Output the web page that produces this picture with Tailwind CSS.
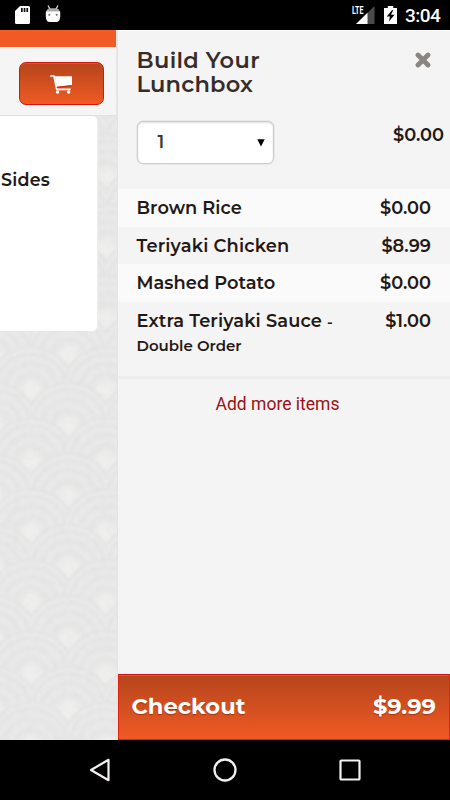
<!DOCTYPE html>
<html lang="en">
<head>
<meta charset="utf-8">
<meta name="viewport" content="width=device-width, initial-scale=1">
<title>Build Your Lunchbox</title>
<script src="https://cdn.jsdelivr.net/npm/@tailwindcss/browser@4"></script>
</head>
<body class="w-[450px] h-[800px] overflow-hidden bg-black font-['Montserrat','Inter',sans-serif] text-[#231815]">
<div class="flex flex-col h-[800px]">
  <!-- Status bar -->
  <header class="h-[30px] shrink-0 flex items-start pl-[15px] pr-[10px] text-white">
    <svg class="w-[15px] h-[18px] mt-[6px]" viewBox="0 0 15 18"><path d="M5 0h8.500q1.500 0 1.500 1.500v15q0 1.500-1.500 1.500h-12Q0 18 0 16.500V5Z" fill="#fff"/><path d="M6 2h1.700v4H6zM8.700 2h1.700v4H8.700zM11.400 2h1.700v4h-1.700z" fill="#111"/></svg>
    <svg class="w-[16px] h-[18px] mt-[5px] ml-[15px]" viewBox="0 0 16 18"><path d="M3 0.500 5 4M13 0.500 11 4" stroke="#ddd" stroke-width="1.300"/><path d="M1 7Q2 3.300 5 3.300h6q3 0 4 3.700Z" fill="#aaa"/><path d="M.8 6.500h14.400v5Q15 17 11 17H5Q1 17 .8 11.500Z" fill="#fff"/><circle cx="4.300" cy="9.800" r="1.100" fill="#777"/><circle cx="11.700" cy="9.800" r="1.100" fill="#777"/></svg>
    <div class="flex-1"></div>
    <svg class="w-[24px] h-[20px] mt-[5px]" viewBox="0 0 24 20"><path d="M22.500 1v18H4Z" fill="#4a4a4a"/><path d="M15.500 7.800V19H4Z" fill="#fff"/><path d="M0 0h12.500v9.500H0z" fill="#000"/><text x="0" y="8.800" font-family="Roboto" font-weight="700" font-size="10.500" textLength="11.500" lengthAdjust="spacingAndGlyphs" fill="#fff">LTE</text></svg>
    <svg class="w-[13px] h-[18px] mt-[6px] ml-[8px]" viewBox="0 0 12 18" preserveAspectRatio="none"><path d="M3.500 0h5v2H12v16H0V2h3.500Z" fill="#fff"/><path d="M7.500 4 2.500 10.500h3L4.500 15.500 9.800 8.800H6.500L8.500 4Z" fill="#000"/></svg>
    <span class="font-[Roboto] font-medium text-[19px] leading-[30px] mt-[1px] ml-[8px] w-[35px] whitespace-nowrap tracking-[-0.500px]">3:04</span>
  </header>

  <div class="h-[710px] shrink-0 flex">
    <!-- Menu page behind the drawer -->
    <main class="relative isolate w-[117.500px] shrink-0 bg-[#e6e6e5] overflow-hidden border-r border-[#e4e4e4]">
      <svg class="absolute inset-0 -z-10 w-[117px] h-[710px]" viewBox="0 30 117 710">
        <defs>
          <radialGradient id="scale">
            <stop offset="0" stop-color="#f0f0ef"/><stop offset=".18" stop-color="#ededec"/><stop offset=".36" stop-color="#e5e5e5"/>
            <stop offset=".48" stop-color="#eaeaea"/><stop offset=".6" stop-color="#e5e5e5"/><stop offset=".72" stop-color="#eaeaea"/>
            <stop offset=".82" stop-color="#e5e5e5"/><stop offset=".9" stop-color="#eaeaea"/><stop offset="1" stop-color="#e3e3e3"/>
          </radialGradient>
          <pattern id="waves" x="31" y="36" width="75" height="71" patternUnits="userSpaceOnUse">
            <g fill="url(#scale)">
              <circle cx="0" cy="0" r="45"/><circle cx="75" cy="0" r="45"/>
              <circle cx="37.500" cy="35.500" r="45"/>
              <circle cx="0" cy="71" r="45"/><circle cx="75" cy="71" r="45"/>
              <circle cx="37.500" cy="106.500" r="45"/>
            </g>
          </pattern>
          <filter id="fiber" x="0" y="0" width="1" height="1"><feGaussianBlur stdDeviation="1"/></filter>
          <filter id="paper" x="0" y="0" width="1" height="1"><feTurbulence type="fractalNoise" baseFrequency=".15" numOctaves="3" seed="4"/><feColorMatrix values="0 0 0 0 .6  0 0 0 0 .6  0 0 0 0 .6  .6 0 0 0 -.24"/></filter>
        </defs>
        <rect x="-15" y="15" width="147" height="740" fill="url(#waves)" filter="url(#fiber)"/>
        <rect y="30" width="117" height="710" filter="url(#paper)" opacity=".35"/>
      </svg>
      <div class="h-[17px] w-[116px] bg-[#f15a24]"></div>
      <div class="h-[69px] w-[116px] pt-[15px] pl-[18.500px] bg-[#f5f5f5] border-b border-[#e0e0e0]">
        <button class="flex w-[85px] h-[43px] items-center justify-center rounded-[7px] border border-[#d9140c] bg-linear-to-b from-[#b5451c] to-[#f15a24] shadow-[inset_0_1px_0_#e4501f]" aria-label="Cart">
          <svg class="w-[23px] h-[21px] mt-[1px]" viewBox="0 0 23 21"><path d="M.9 2H4l2.700 13.300H20" fill="none" stroke="#fff" stroke-width="1.700" stroke-linecap="round" stroke-linejoin="round"/><path d="M4.700 2.200H22V11L6.700 12.800Z" fill="#fff"/><path d="M6.700 13.400 21 11.800" stroke="#c2220f" stroke-width="1"/><circle cx="7.600" cy="18" r="1.800" fill="#fff"/><circle cx="18.600" cy="18" r="1.800" fill="#fff"/></svg>
        </button>
      </div>
      <section class="w-[98px] h-[215px] rounded-r-[5px] bg-white border-r border-[#ededed] pt-[51px] pl-[1px]">
        <h2 class="text-[17.500px] leading-[26px] font-semibold tracking-[0.200px]">Sides</h2>
      </section>
    </main>

    <!-- Order drawer -->
    <aside class="flex-1 flex flex-col bg-[#f4f4f4] border-t border-white">
      <div class="h-[158px] shrink-0 pl-[19px] pr-[6px]">
        <div class="flex justify-between pt-[17px] pr-[13px]">
          <h1 class="text-[22.500px] leading-[24px] font-semibold text-[#372c29]"><span class="block tracking-[0.350px]">Build Your</span><span class="block tracking-[0.200px]">Lunchbox</span></h1>
          <svg class="w-[16px] h-[16px] mt-[4px]" viewBox="0 0 16 16"><path d="M3 3 13 13M13 3 3 13" stroke="#8b8581" stroke-width="4.800" stroke-linecap="round"/></svg>
        </div>
        <div class="flex justify-between items-start mt-[25px]">
          <div class="w-[137.500px] h-[43px] rounded-[6px] border-[1.500px] border-[#cdcdcd] bg-white flex items-center justify-between pl-[20px] pr-[8px] shadow-[inset_0_1px_2px_#e0e0e0,0_0_0_.5px_#dcdcdc]">
            <span class="text-[17.500px] font-semibold text-[#3b3b3b]">1</span>
            <svg class="w-[8px] h-[8px]" viewBox="0 0 8 8"><path d="M.3.200h7.400L4 7.500Z" fill="#000"/></svg>
          </div>
          <span class="text-[17.800px] leading-[27px] font-semibold">$0.00</span>
        </div>
      </div>
      <ul class="text-[17.800px] leading-[37.500px] font-semibold">
        <li class="h-[37.500px] pl-[19px] pr-[19px] flex justify-between bg-[#fafafa]"><span class="tracking-[0.050px]">Brown Rice</span><span>$0.00</span></li>
        <li class="h-[37.500px] pl-[19px] pr-[19px] flex justify-between"><span class="tracking-[0.200px]">Teriyaki Chicken</span><span>$8.99</span></li>
        <li class="h-[37.500px] pl-[19px] pr-[19px] flex justify-between bg-[#fafafa]"><span class="tracking-[0.050px]">Mashed Potato</span><span>$0.00</span></li>
        <li class="h-[77.500px] pl-[19px] pr-[19px] flex justify-between border-b-[3px] border-[#ededed]">
          <div><span class="tracking-[0.150px]">Extra Teriyaki Sauce <span class="text-[15px]">-</span></span><div class="text-[15px] leading-[20px] mt-[-4.500px]">Double Order</div></div>
          <span>$1.00</span>
        </li>
      </ul>
      <a class="block pt-[12px] pr-[12.500px] text-center font-[Roboto] text-[17.500px] leading-[26px] text-[#9b1114]">Add more items</a>
      <div class="flex-1"></div>
      <button class="w-full h-[66px] shrink-0 flex justify-between items-center pl-[13px] pr-[13px] pb-[1px] border border-[#e2220f] border-t-[#cf1111] bg-linear-to-b from-[#b5451c] to-[#f15a24] shadow-[inset_0_1px_0_#ef5322] text-white font-bold text-[22.600px] [text-shadow:0_1px_1px_rgb(110_20_0/.5)]"><span>Checkout</span><span>$9.99</span></button>
    </aside>
  </div>

  <!-- Android navigation -->
  <nav class="h-[60px] shrink-0 flex items-center justify-between pl-[88px] pr-[88px]">
    <svg class="w-[24px] h-[26px]" viewBox="0 0 24 26"><path d="M3 13 20.500 2.800V23.200Z" fill="none" stroke="#f4f0f0" stroke-width="2.200" stroke-linejoin="round"/></svg>
    <svg class="w-[24px] h-[24px]" viewBox="0 0 24 24"><circle cx="12" cy="12" r="10.500" fill="none" stroke="#f4f0f0" stroke-width="2.300"/></svg>
    <svg class="w-[24px] h-[24px]" viewBox="0 0 24 24"><rect x="2.500" y="2.500" width="19" height="19" rx=".8" fill="none" stroke="#f4f0f0" stroke-width="2.200"/></svg>
  </nav>
</div>
</body>
</html>
